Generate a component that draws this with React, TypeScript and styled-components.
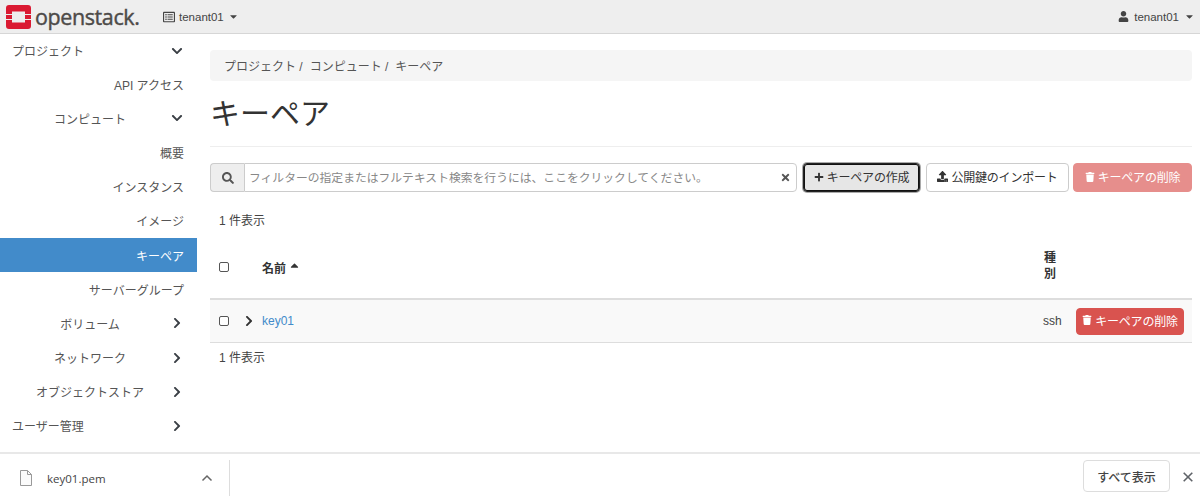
import React from "react";
import styled, { createGlobalStyle } from "styled-components";
import {
  FaSearch, FaTimes, FaPlus, FaUpload, FaTrash, FaChevronDown, FaChevronRight,
  FaUser, FaCaretDown, FaSortUp, FaRegListAlt,
} from "react-icons/fa";

const Global = createGlobalStyle`
  html, body { margin: 0; padding: 0; background: #fff; }
  body { font-family: "Liberation Sans", "Noto Sans CJK JP", sans-serif; font-size: 12px; color: #333; }
  * { box-sizing: border-box; }
`;

const Page = styled.div`
  width: 1200px; height: 501px; display: flex; flex-direction: column; overflow: hidden;
`;
const TopBar = styled.header`
  flex: 0 0 34px; display: flex; align-items: center; background: #eee;
  border-bottom: 1px solid #d6d6d6; padding: 0 5px 0 6px;
`;
const Brand = styled.div`
  display: flex; align-items: center; gap: 4px; width: 157px;
`;
const BrandName = styled.span`
  font-family: "Open Sans", "Liberation Sans", sans-serif; font-size: 21.5px; color: #4d4a48;
  letter-spacing: -0.4px; line-height: 1; -webkit-text-stroke: 0.4px #4d4a48;
`;
const NavMenu = styled.div<{ $push?: boolean }>`
  display: flex; align-items: center; gap: ${(p) => (p.$push ? "5px" : "4px")}; color: #444; font-size: 11.5px;
  margin-left: ${(p) => (p.$push ? "auto" : "0")};
`;
const Layout = styled.div`
  flex: 1; display: flex; min-height: 0; overflow: hidden;
`;
const Sidebar = styled.nav`
  width: 197px; flex: none; display: flex; flex-direction: column;
`;
type ItemProps = { $kind: "top" | "group" | "leaf"; $active?: boolean };
const NavItem = styled.div<ItemProps>`
  height: 34.2px; flex: none; display: flex; align-items: center; position: relative;
  color: ${(p) => (p.$active ? "#fff" : "#555")};
  background: ${(p) => (p.$active ? "#428bca" : "transparent")};
  padding: ${(p) => (p.$kind === "top" ? "0 0 0 12px" : p.$kind === "leaf" ? "0 13px 0 0" : "0 17px 0 0")};
  justify-content: ${(p) => (p.$kind === "top" ? "flex-start" : p.$kind === "leaf" ? "flex-end" : "center")};
  &:first-child { height: 33px; padding-bottom: 1px; }
`;
const NavChevron = styled.span`
  position: absolute; left: 171px; top: 50%; transform: translateY(-50%);
  display: flex; color: #3a3f45; font-size: 12px;
`;
const Main = styled.main`
  flex: 1; min-width: 0; padding: 16px 8px 0 13px;
`;
const Breadcrumb = styled.div`
  height: 31px; background: #f5f5f5; border-radius: 4px; display: flex; align-items: center;
  padding-left: 14px; color: #555; gap: 4px;
`;
const Crumb = styled.span`
  margin-right: 3px;
`;
const Title = styled.h1`
  margin: 0; font-size: 30px; font-weight: 400; line-height: 1; color: #333;
  padding: 18px 0 17px; border-bottom: 1px solid #eee;
`;
const Toolbar = styled.div`
  margin-top: 16px; display: flex; height: 29px;
`;
const AddOn = styled.div`
  width: 34px; flex: none; background: #eee; border: 1px solid #ccc; border-right: none;
  border-radius: 4px 0 0 4px; display: flex; align-items: center; justify-content: center;
  color: #555; font-size: 12px;
`;
const Filter = styled.div`
  width: 553px; flex: none; border: 1px solid #ccc; border-radius: 0 4px 4px 0; display: flex;
  align-items: center; justify-content: space-between; padding: 0 5px 2px 4px; color: #888;
  font-size: 11.8px;
`;
const ClearIcon = styled.span`
  display: flex; color: #555; font-size: 11px; position: relative; top: 1px;
`;
type BtnProps = { $variant: "focus" | "default" | "danger" | "dangerOff" };
const Button = styled.button<BtnProps>`
  height: 29px; font: inherit; font-size: 12px; display: inline-flex; align-items: center; justify-content: center;
  gap: 3px; border-radius: 4px; padding: 0 4px 2px; white-space: nowrap; letter-spacing: -0.2px;
  border: 1px solid ${(p) => (p.$variant === "default" ? "#ccc" : p.$variant === "focus" ? "#222" : "#d9534f")};
  background: ${(p) => (p.$variant === "focus" ? "#e6e6e6" : p.$variant === "default" ? "#fff" : "#d9534f")};
  color: ${(p) => (p.$variant === "focus" || p.$variant === "default" ? "#333" : "#fff")};
  opacity: ${(p) => (p.$variant === "dangerOff" ? 0.65 : 1)};
  box-shadow: ${(p) => (p.$variant === "focus" ? "0 0 0 1px #aaa, inset 0 0 0 1px #111" : "none")};
  svg { flex: none; }
`;
const CreateButton = styled(Button)`
  width: 117px; margin-left: 6px;
`;
const ImportButton = styled(Button)`
  width: 143px; margin-left: 6px;
`;
const DeleteAllButton = styled(Button)`
  width: 119px; margin-left: 4px;
`;
const RowDelete = styled(Button)`
  width: 108px; height: 27px;
`;
const Count = styled.div`
  padding-left: 9px; height: 14px; line-height: 14px; color: #444;
`;
const TopCount = styled(Count)`
  margin-top: 22px;
`;
const BottomCount = styled(Count)`
  margin-top: 8px;
`;
const Table = styled.div`
  margin-top: 8px; display: flex; flex-direction: column;
`;
const TableHead = styled.div`
  height: 64px; display: grid; grid-template-columns: 43px 1fr 32px 117px; align-items: center;
  border-bottom: 2px solid #ddd; font-weight: 700; padding-left: 9px; color: #333;
`;
const TableRow = styled.div`
  height: 43px; display: grid; grid-template-columns: 43px 1fr 32px 117px; align-items: center;
  background: #f9f9f9; border-bottom: 1px solid #ddd; padding-left: 9px; color: #444;
`;
const SelectCell = styled.div`
  display: flex; align-items: center; gap: 14px;
`;
const Check = styled.span`
  width: 10px; height: 10px; border: 1px solid #555; border-radius: 2px; background: #fff; display: block; flex: none;
`;
const Expander = styled.span`
  display: flex; color: #333; font-size: 12px;
`;
const NameHead = styled.div`
  display: flex; align-items: center; gap: 2px;
`;
const SortIcon = styled.span`
  display: flex; font-size: 13px; position: relative; top: 1px;
`;
const KeyLink = styled.span`
  color: #428bca;
`;
const TypeHead = styled.div`
  width: 12px; line-height: 16px; padding-bottom: 2px; margin-left: 1px;
`;
const ActionCell = styled.div`
  display: flex; justify-content: flex-end; padding-right: 8px;
`;
const DownloadBar = styled.footer`
  flex: 0 0 49px; display: flex; align-items: center; background: #fff; border-top: 2px solid #e8e8e8;
`;
const FileChip = styled.div`
  width: 230px; height: 36px; flex: none; display: flex; align-items: center; padding-left: 20px;
  border-right: 1px solid #ddd;
`;
const FileName = styled.span`
  margin-left: 15px; color: #444; width: 154px; position: relative; top: 1px;
  font-family: "Open Sans", "Liberation Sans", sans-serif; font-size: 11.5px;
`;
const ShowAll = styled.button`
  margin-left: auto; width: 87px; height: 32px; font: inherit; font-size: 12px; font-weight: 500;
  color: #444; background: #fff; border: 1px solid #ddd; border-radius: 4px;
  margin-right: 13px; margin-bottom: 3px;
`;
const CloseWrap = styled.div`
  display: flex; margin-right: 7px; margin-bottom: 1px;
`;

const Logo = () => (
  <svg width="25" height="24" viewBox="0 0 25 24">
    <path fill="#da1a32" d="M3 0h19a3 3 0 0 1 3 3v6h-6V6.500H6V9H0V3a3 3 0 0 1 3-3z" />
    <path fill="#da1a32" d="M3 24h19a3 3 0 0 0 3-3v-6h-6v2.500H6V15H0v6a3 3 0 0 0 3 3z" />
    <rect fill="#da1a32" x="0" y="10" width="6" height="4" />
    <rect fill="#da1a32" x="19" y="10" width="6" height="4" />
  </svg>
);
const FileIcon = () => (
  <svg width="12" height="16" viewBox="0 0 12 16" fill="none" stroke="#999" strokeWidth="1">
    <path d="M.5.5h7l4 4v11H.5z" fill="#fbfbfb" />
    <path d="M7.500.5v4h4" />
  </svg>
);
const Caret = () => (
  <svg width="12" height="8" viewBox="0 0 12 8" fill="none" stroke="#666" strokeWidth="1.500">
    <path d="M1.500 6.500L6 2l4.500 4.500" />
  </svg>
);
const CloseIcon = () => (
  <svg width="10" height="10" viewBox="0 0 10 10" fill="none" stroke="#5f6368" strokeWidth="1.600">
    <path d="M.7.7l8.600 8.600M9.300.7L.7 9.300" />
  </svg>
);

const nav: { label: string; kind: "top" | "group" | "leaf"; chevron?: "down" | "right"; active?: boolean }[] = [
  { label: "プロジェクト", kind: "top", chevron: "down" },
  { label: "API アクセス", kind: "leaf" },
  { label: "コンピュート", kind: "group", chevron: "down" },
  { label: "概要", kind: "leaf" },
  { label: "インスタンス", kind: "leaf" },
  { label: "イメージ", kind: "leaf" },
  { label: "キーペア", kind: "leaf", active: true },
  { label: "サーバーグループ", kind: "leaf" },
  { label: "ボリューム", kind: "group", chevron: "right" },
  { label: "ネットワーク", kind: "group", chevron: "right" },
  { label: "オブジェクトストア", kind: "group", chevron: "right" },
  { label: "ユーザー管理", kind: "top", chevron: "right" },
];

export default function App() {
  return (
    <Page>
      <Global />
      <TopBar>
        <Brand>
          <Logo />
          <BrandName>openstack.</BrandName>
        </Brand>
        <NavMenu>
          <FaRegListAlt size={12} />
          tenant01
          <FaCaretDown size={11} />
        </NavMenu>
        <NavMenu $push>
          <FaUser size={11} />
          tenant01
          <FaCaretDown size={11} />
        </NavMenu>
      </TopBar>
      <Layout>
        <Sidebar>
          {nav.map((n) => (
            <NavItem key={n.label} $kind={n.kind} $active={n.active}>
              {n.label}
              {n.chevron && (
                <NavChevron>{n.chevron === "down" ? <FaChevronDown /> : <FaChevronRight />}</NavChevron>
              )}
            </NavItem>
          ))}
        </Sidebar>
        <Main>
          <Breadcrumb>
            <Crumb>プロジェクト /</Crumb>
            <Crumb>コンピュート /</Crumb>
            <Crumb>キーペア</Crumb>
          </Breadcrumb>
          <Title>キーペア</Title>
          <Toolbar>
            <AddOn><FaSearch /></AddOn>
            <Filter>
              フィルターの指定またはフルテキスト検索を行うには、ここをクリックしてください。
              <ClearIcon><FaTimes /></ClearIcon>
            </Filter>
            <CreateButton $variant="focus"><FaPlus size={10} />キーペアの作成</CreateButton>
            <ImportButton $variant="default"><FaUpload size={11} />公開鍵のインポート</ImportButton>
            <DeleteAllButton $variant="dangerOff"><FaTrash size={10} />キーペアの削除</DeleteAllButton>
          </Toolbar>
          <TopCount>1 件表示</TopCount>
          <Table>
            <TableHead>
              <Check />
              <NameHead>名前<SortIcon><FaSortUp /></SortIcon></NameHead>
              <TypeHead>種別</TypeHead>
              <div />
            </TableHead>
            <TableRow>
              <SelectCell>
                <Check />
                <Expander><FaChevronRight /></Expander>
              </SelectCell>
              <KeyLink>key01</KeyLink>
              <span>ssh</span>
              <ActionCell>
                <RowDelete $variant="danger"><FaTrash size={10} />キーペアの削除</RowDelete>
              </ActionCell>
            </TableRow>
          </Table>
          <BottomCount>1 件表示</BottomCount>
        </Main>
      </Layout>
      <DownloadBar>
        <FileChip>
          <FileIcon />
          <FileName>key01.pem</FileName>
          <Caret />
        </FileChip>
        <ShowAll>すべて表示</ShowAll>
        <CloseWrap><CloseIcon /></CloseWrap>
      </DownloadBar>
    </Page>
  );
}
